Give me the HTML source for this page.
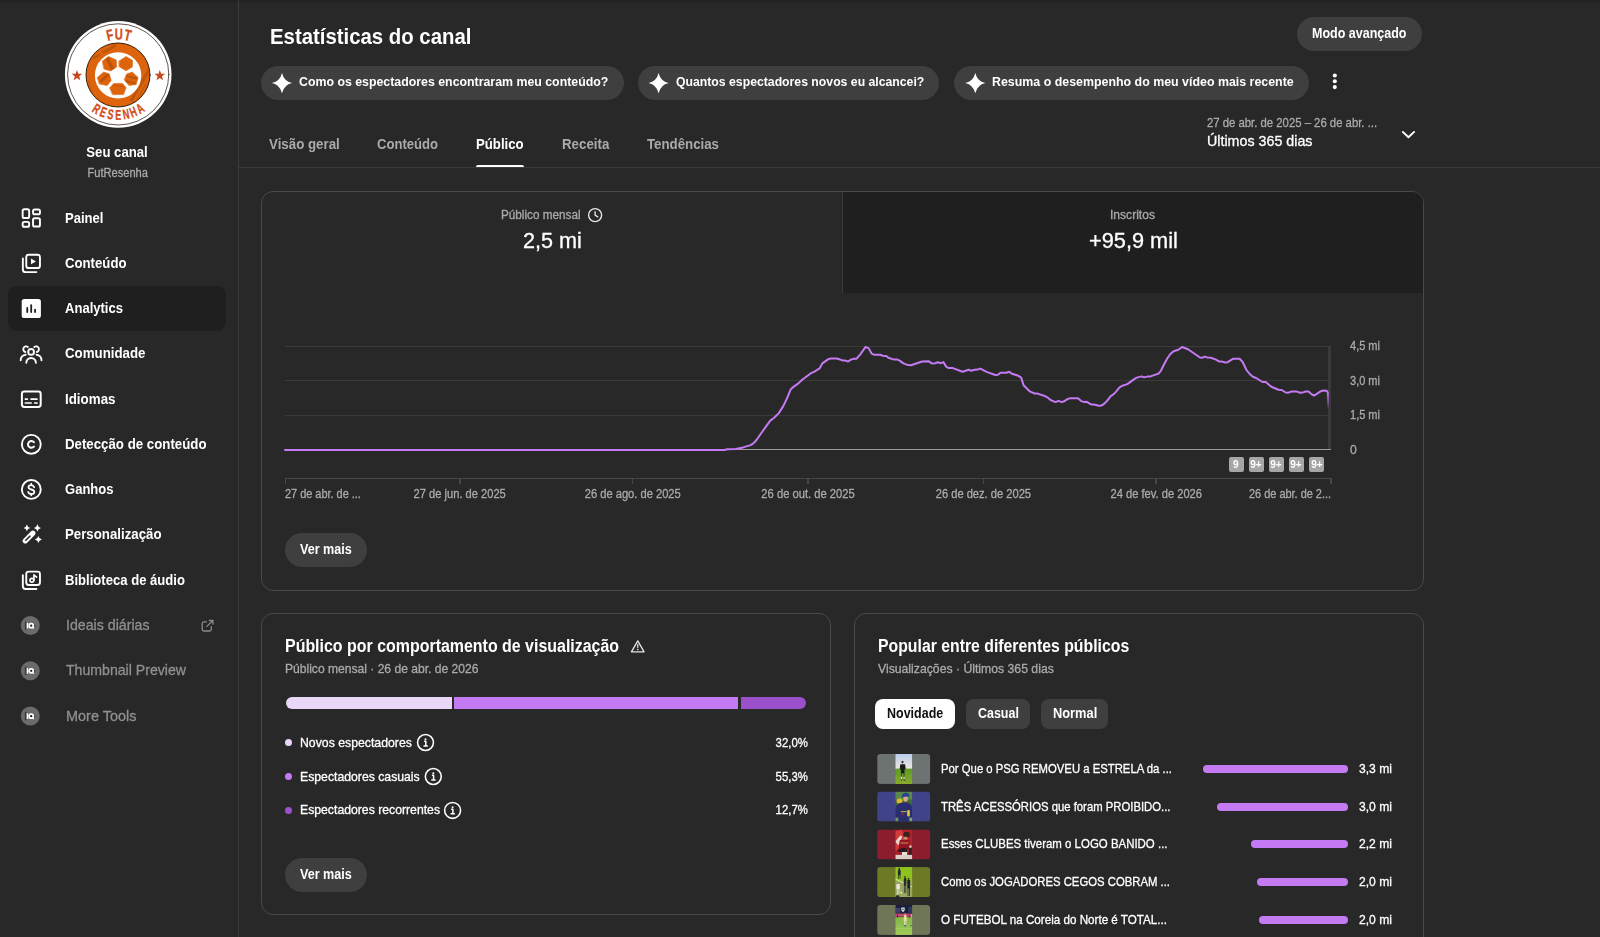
<!DOCTYPE html>
<html lang="pt-BR">
<head>
<meta charset="utf-8">
<title>Estatísticas do canal</title>
<style>
*{box-sizing:border-box;margin:0;padding:0}
html,body{width:1600px;height:937px;overflow:hidden;background:#282828;font-family:"Liberation Sans",sans-serif;color:#fff}
#root{position:relative;width:1600px;height:937px;overflow:hidden;background:#282828}
.a{position:absolute}
.t{position:absolute;white-space:pre;display:block}
.topshade{left:0;top:0;width:1600px;height:4px;background:linear-gradient(#222222,#282828)}
.sideborder{left:238px;top:0;width:1px;height:937px;background:#3b3b3b}
.sel{left:8px;top:286px;width:218px;height:45px;border-radius:9px;background:#1f1f1f}
.chip{height:34.2px;border-radius:17.1px;background:#3f3f3f;top:65.9px}
.pill{height:34px;border-radius:17px;background:#3f3f3f}
.tabline{left:239px;top:167px;width:1361px;height:1px;background:#3b3b3b}
.tabsel{left:476px;top:165px;width:48px;height:2.4px;background:#fff;border-radius:2px 2px 0 0}
.card{border:1px solid #494949;border-radius:12px;background:#282828}
.grid{left:285px;width:1046px;height:1px;background:#3a3a3a}
.badge{top:457px;width:15.4px;height:15.2px;border-radius:2px;background:#a6a6a6}
.dot{width:7.6px;height:7.6px;border-radius:50%}
.bar{height:8px;border-radius:4px;background:#c47af3}
.seg{top:697px;height:12px}
.btn{border-radius:8px;background:#3f3f3f;top:699px;height:29.9px}
</style>
</head>
<body>
<div id="root">
<div class="a topshade"></div>
<div class="a sideborder"></div>
<div class="a sel"></div>

<!-- header chips -->
<div class="a chip" style="left:261.1px;width:362.5px"></div>
<div class="a chip" style="left:638.2px;width:301.2px"></div>
<div class="a chip" style="left:954.2px;width:354.8px"></div>
<div class="a pill" style="left:1297px;top:16.8px;width:125px;height:34.1px"></div>
<div class="a tabline"></div>
<div class="a tabsel"></div>

<!-- card 1 -->
<div class="a card" style="left:261.1px;top:190.7px;width:1162.7px;height:400.1px;overflow:hidden">
  <div class="a" style="left:581px;top:0;width:582px;height:101.6px;background:#1f1f1f"></div>
  <div class="a" style="left:579.6px;top:0;width:1.6px;height:101.8px;background:#3b3b3b"></div>
</div>
<div class="a grid" style="top:346px"></div>
<div class="a grid" style="top:380.4px"></div>
<div class="a grid" style="top:414.8px"></div>
<div class="a" style="left:1327.7px;top:346px;width:3.7px;height:104px;background:#3a3a3a"></div>
<div class="a grid" style="top:449px;background:#9a9a9a;height:1.2px"></div>
<div class="a grid" style="top:477.7px;background:#474747;height:1.6px;width:1046.6px"></div>
<svg class="a" style="left:0;top:0" width="1600" height="937" viewBox="0 0 1600 937">
<defs><linearGradient id="fade" gradientUnits="userSpaceOnUse" x1="0" y1="390" x2="0" y2="412"><stop offset="0" stop-color="#c47af3"/><stop offset="1" stop-color="#c47af3" stop-opacity="0"/></linearGradient>
<mask id="lm"><rect x="0" y="0" width="1600" height="392" fill="#fff"/><rect x="0" y="392" width="1320" height="100" fill="#fff"/><rect x="1320" y="392" width="20" height="30" fill="url(#mg)"/></mask>
<linearGradient id="mg" gradientUnits="userSpaceOnUse" x1="0" y1="392" x2="0" y2="410"><stop offset="0" stop-color="#fff"/><stop offset="1" stop-color="#000"/></linearGradient></defs>
<path d="M285.0,450.0 L724.4,450.0 L727.2,449.3 L735.6,448.9 L743.1,447.4 L750.6,445.1 L753.4,443.4 L756.3,440.3 L761.9,432.2 L770.3,420.6 L774.1,417.8 L778.8,413.1 L783.4,405.9 L787.2,397.9 L790.6,389.6 L793.8,386.6 L798.4,383.4 L802.2,379.7 L811.6,372.8 L814.4,371.6 L819.6,368.4 L822.3,363.4 L828.4,359.1 L831.3,358.5 L836.9,358.5 L842.5,360.4 L845.3,360.6 L848.1,361.5 L850.9,359.6 L853.8,358.7 L856.6,358.7 L860.3,354.4 L865.6,346.9 L868.8,348.4 L871.6,353.6 L874.4,354.8 L880.0,354.8 L882.8,355.7 L886.0,355.9 L888.4,357.8 L894.1,359.6 L896.9,359.4 L899.7,360.6 L903.4,363.4 L908.1,365.1 L910.9,365.3 L922.2,361.5 L928.8,361.3 L931.9,363.4 L935.3,363.2 L937.8,362.3 L940.9,363.2 L943.4,362.1 L946.2,366.6 L948.4,367.9 L952.2,367.9 L962.5,371.8 L968.7,369.8 L971.3,370.7 L974.7,369.8 L977.5,369.6 L980.3,368.6 L986.6,371.9 L995.2,375.0 L997.9,374.8 L1000.5,372.8 L1006.4,372.8 L1009.1,371.8 L1012.0,373.7 L1018.4,375.8 L1021.2,377.6 L1023.6,385.2 L1029.6,391.3 L1034.4,393.4 L1037.6,393.6 L1044.0,395.7 L1047.3,397.3 L1050.5,400.0 L1055.6,402.1 L1058.5,400.9 L1061.7,402.1 L1064.1,401.3 L1067.7,398.9 L1070.5,398.2 L1078.0,398.2 L1081.2,401.1 L1083.8,401.9 L1086.5,401.7 L1089.7,403.7 L1092.1,404.6 L1095.3,404.8 L1098.5,405.7 L1100.9,405.7 L1103.3,404.5 L1106.5,401.6 L1110.5,396.3 L1113.7,394.1 L1116.1,391.6 L1119.3,387.6 L1121.7,386.0 L1127.3,384.1 L1135.3,378.4 L1137.7,377.4 L1141.7,376.4 L1144.1,377.4 L1147.3,376.6 L1150.5,376.4 L1158.5,373.6 L1160.9,370.8 L1163.2,366.0 L1167.2,358.5 L1170.4,354.0 L1173.6,351.3 L1178.4,349.7 L1182.1,347.0 L1188.0,349.2 L1200.0,357.5 L1202.0,357.7 L1204.8,356.6 L1207.2,357.5 L1210.9,357.7 L1216.0,359.6 L1218.9,361.4 L1221.6,361.4 L1224.9,362.5 L1227.3,362.3 L1232.9,358.8 L1239.6,358.8 L1242.5,361.7 L1246.5,370.0 L1249.7,374.0 L1252.9,376.8 L1256.1,378.0 L1262.5,382.0 L1265.7,382.0 L1271.3,386.8 L1278.5,389.7 L1281.7,390.0 L1285.7,392.5 L1288.1,392.8 L1291.3,391.6 L1296.9,391.6 L1300.1,392.8 L1302.5,392.6 L1305.7,391.5 L1308.6,391.5 L1311.3,394.1 L1314.0,395.5 L1316.1,394.4 L1320.9,391.2 L1323.3,390.5 L1326.5,390.7 L1327.8,392.3 L1328.2,410.0" fill="none" stroke="#c47af3" stroke-width="2" stroke-linejoin="round" stroke-linecap="round" mask="url(#lm)"/>
</svg><div class="a" style="left:284.6px;top:478px;width:1.6px;height:5.8px;background:#474747"></div><div class="a" style="left:459.4px;top:478px;width:1.6px;height:5.8px;background:#474747"></div><div class="a" style="left:631.8px;top:478px;width:1.6px;height:5.8px;background:#474747"></div><div class="a" style="left:807.3px;top:478px;width:1.6px;height:5.8px;background:#474747"></div><div class="a" style="left:982.5px;top:478px;width:1.6px;height:5.8px;background:#474747"></div><div class="a" style="left:1155.3px;top:478px;width:1.6px;height:5.8px;background:#474747"></div><div class="a" style="left:1330px;top:478px;width:1.6px;height:5.8px;background:#474747"></div><div class="a badge" style="left:1228.6px"></div><div class="a badge" style="left:1248.6px"></div><div class="a badge" style="left:1268.7px"></div><div class="a badge" style="left:1288.8px"></div><div class="a badge" style="left:1308.8px"></div>
<div class="a pill" style="left:285px;top:533px;width:82px;height:33.5px"></div>

<!-- card 2 -->
<div class="a card" style="left:261.1px;top:613.2px;width:569.9px;height:301.8px"></div>
<div class="a seg" style="left:286.4px;width:165.3px;background:#ead7f7;border-radius:6px 0 0 6px"></div>
<div class="a seg" style="left:454.3px;width:284.2px;background:#c47af3"></div>
<div class="a seg" style="left:740.7px;width:65.4px;background:#9a4fcb;border-radius:0 6px 6px 0"></div>
<div class="a dot" style="left:284.9px;top:738.7px;background:#ead7f7"></div>
<div class="a dot" style="left:284.9px;top:772.7px;background:#c47af3"></div>
<div class="a dot" style="left:284.9px;top:806.6px;background:#9a4fcb"></div>
<div class="a pill" style="left:285px;top:858px;width:82px;height:33.5px"></div>

<!-- card 3 -->
<div class="a card" style="left:854px;top:613.2px;width:569.8px;height:400px"></div>
<div class="a btn" style="left:875px;width:80px;background:#fff"></div>
<div class="a btn" style="left:966px;width:64px"></div>
<div class="a btn" style="left:1041.4px;width:66.9px"></div>
<div class="a bar" style="left:1202.6px;width:145.4px;top:764.7px"></div>
<div class="a bar" style="left:1216.8px;width:131.2px;top:802.5px"></div>
<div class="a bar" style="left:1251px;width:97px;top:840.3px"></div>
<div class="a bar" style="left:1257.3px;width:90.7px;top:878.1px"></div>
<div class="a bar" style="left:1259.2px;width:88.8px;top:915.9px"></div>
<svg class="a" style="left:0;top:0" width="1600" height="937" viewBox="0 0 1600 937">
<defs><filter id="bl" x="-10%" y="-10%" width="120%" height="120%"><feGaussianBlur stdDeviation="0.55"/></filter>
<clipPath id="tc0"><rect x="877.3" y="753.9" width="52.8" height="30" rx="3.2"/></clipPath>
<clipPath id="ic0"><rect x="895.3" y="753.9" width="17" height="30"/></clipPath>
<clipPath id="tc1"><rect x="877.3" y="791.6" width="52.8" height="30" rx="3.2"/></clipPath>
<clipPath id="ic1"><rect x="895.3" y="791.6" width="17" height="30"/></clipPath>
<clipPath id="tc2"><rect x="877.3" y="829.4" width="52.8" height="30" rx="3.2"/></clipPath>
<clipPath id="ic2"><rect x="895.3" y="829.4" width="17" height="30"/></clipPath>
<clipPath id="tc3"><rect x="877.3" y="867.1" width="52.8" height="30" rx="3.2"/></clipPath>
<clipPath id="ic3"><rect x="895.3" y="867.1" width="17" height="30"/></clipPath>
<clipPath id="tc4"><rect x="877.3" y="904.9" width="52.8" height="30" rx="3.2"/></clipPath>
<clipPath id="ic4"><rect x="895.3" y="904.9" width="17" height="30"/></clipPath>
<linearGradient id="sky" x1="0" y1="0" x2="0" y2="1"><stop offset="0" stop-color="#b9cdee"/><stop offset="1" stop-color="#ece6df"/></linearGradient>
<linearGradient id="grass1" x1="0" y1="0" x2="0" y2="1"><stop offset="0" stop-color="#5d9a22"/><stop offset="1" stop-color="#86ad2c"/></linearGradient>
<linearGradient id="grass5" x1="0" y1="0" x2="0" y2="1"><stop offset="0" stop-color="#6fa83a"/><stop offset="1" stop-color="#9fcb58"/></linearGradient>
</defs>
<g clip-path="url(#tc0)"><rect x="877" y="753.9" width="54" height="30" fill="#6c7370"/>
<g clip-path="url(#ic0)"><g filter="url(#bl)">
<rect x="895.3" y="753.9" width="17" height="15" fill="url(#sky)"/>
<rect x="895.3" y="768.6999999999999" width="17" height="15.4" fill="url(#grass1)"/>
<ellipse cx="902.5" cy="762.1" rx="1.1" ry="1.3" fill="#3a2e28"/>
<path d="M900.3,764.1999999999999 h4.8 l0.6,5 h-1.2 v4.3 h-3.6 v-4.3 h-1.2 z" fill="#181a1c"/>
<path d="M901.4,773.5 v6.2 M904.1,773.5 v6.2" stroke="#4a4038" stroke-width="1.1"/>
<path d="M901.4,776.6999999999999 v2.4 M904.1,776.6999999999999 v2.4" stroke="#ddd" stroke-width="1.2"/>
<path d="M900.8,780.1999999999999 h1.4 M903.8,780.5 h1.5" stroke="#7a3050" stroke-width="0.9"/>
</g></g></g>
<g clip-path="url(#tc1)"><rect x="877" y="791.6" width="54" height="30" fill="#40428a"/>
<g clip-path="url(#ic1)"><g filter="url(#bl)">
<rect x="895.3" y="791.6" width="17" height="30" fill="#3f6a35"/>
<rect x="895.3" y="791.6" width="17" height="8" fill="#5a8a48"/>
<ellipse cx="899.6" cy="801.0" rx="3" ry="2.6" fill="#e2b92e"/>
<path d="M895.3,821.6 v-14 q1.5,-4 6.5,-5.2 h5 q4.5,1 5.5,5 v14.2 z" fill="#2b2d70"/>
<ellipse cx="905.6" cy="799.0" rx="2.3" ry="2.8" fill="#d9a78e"/>
<path d="M901.6,797.6 q0.2,-4.8 4.2,-4.8 q3.6,0.2 3.6,4 q-3.9,-0.8 -7.8,0.8 z" fill="#2c3f92"/>
<rect x="907.2" y="810.0" width="2.6" height="6.4" rx="1" fill="#d6cf3e"/>
<rect x="900.8" y="811.0" width="5.8" height="1.2" fill="#c9bf3a" opacity="0.8"/>
<ellipse cx="902.7" cy="814.2" rx="1.6" ry="1.2" fill="#7a2a4a"/>
<rect x="895.3" y="817.6" width="3" height="4" fill="#6a9a5a"/><rect x="909.3" y="817.6" width="3" height="4" fill="#7aa070"/>
</g></g></g>
<g clip-path="url(#tc2)"><rect x="877" y="829.4" width="54" height="30" fill="#8b1d2d"/>
<g clip-path="url(#ic2)"><g filter="url(#bl)">
<rect x="895.3" y="829.4" width="17" height="30" fill="#b2202c"/>
<path d="M895.3,831.4 l6,-2 l4,6 l-3,8 l-7,8 z" fill="#d63a3a"/>
<path d="M895.3,841.4 l5,-6 l2,1 l-4,9 z" fill="#e8d8d0"/>
<ellipse cx="906.5" cy="834.8" rx="3.4" ry="3" fill="#3a2420"/>
<ellipse cx="905.6" cy="838.1999999999999" rx="2" ry="1.6" fill="#c88a70"/>
<path d="M899.8,839.9 h9.6 l1.2,9 h-12 z" fill="#8e1626"/>
<path d="M900.5,843.0 h8 " stroke="#d8a040" stroke-width="0.9"/>
<path d="M897.6,850.4 q5,-4 10,-1.5 l-1,3 h-9 z" fill="#2a1a1c"/>
<rect x="908.8" y="847.4" width="3" height="12" fill="#2a2226"/>
<rect x="895.3" y="854.9" width="17" height="4.5" fill="#d8cfc8"/>
<rect x="902" y="852.0" width="5" height="3.2" fill="#e6e0da"/>
<rect x="909.3" y="845.4" width="2.2" height="2.4" fill="#d8d0c8"/>
</g></g></g>
<g clip-path="url(#tc3)"><rect x="877" y="867.1" width="54" height="30" fill="#6e7925"/>
<g clip-path="url(#ic3)"><g filter="url(#bl)">
<rect x="895.3" y="867.1" width="17" height="30" fill="#8fc21f"/>
<rect x="895.3" y="881.1" width="17" height="16" fill="#9aa860"/>
<path d="M895.3,879.1 l17,8" stroke="#dfe8c8" stroke-width="0.9"/>
<ellipse cx="899.2" cy="868.9" rx="1" ry="1.1" fill="#3a3028"/><rect x="897.9" y="869.9" width="2.8" height="5.4" rx="0.8" fill="#23262a"/><path d="M898.5,875.1 v3.6 M900,875.1 v3.6" stroke="#2a2c30" stroke-width="0.8"/>
<ellipse cx="905" cy="877.1" rx="0.9" ry="1" fill="#4a3a30"/><rect x="903.8" y="878.1" width="2.6" height="8" rx="0.8" fill="#2a2c2e"/><path d="M904.4,886.1 v7 M905.8,886.1 v7" stroke="#30343a" stroke-width="0.8"/>
<ellipse cx="908.6" cy="878.7" rx="0.9" ry="1" fill="#3a2e28"/><rect x="907.3" y="879.7" width="2.8" height="9" rx="0.8" fill="#1f2226"/><path d="M908,888.6 v7.5 M909.5,888.6 v7.5" stroke="#23262a" stroke-width="0.8"/>
<ellipse cx="898" cy="883.1" rx="1" ry="1" fill="#b08a70"/><rect x="896.3" y="884.1" width="3.6" height="5.2" rx="1" fill="#ece4dc"/><path d="M897.3,889.1 v6 M899,889.1 v5" stroke="#e2d8cc" stroke-width="0.9"/>
<ellipse cx="897.6" cy="896.3000000000001" rx="2" ry="1.1" fill="#30281e"/>
<ellipse cx="901.2" cy="892.7" rx="0.9" ry="0.9" fill="#e8e8e8"/>
</g></g></g>
<g clip-path="url(#tc4)"><rect x="877" y="904.9" width="54" height="30" fill="#6e7658"/>
<g clip-path="url(#ic4)"><g filter="url(#bl)">
<rect x="895.3" y="904.9" width="17" height="30" fill="url(#grass5)"/>
<rect x="895.3" y="904.9" width="17" height="9" fill="#1c1d3c"/>
<rect x="895.3" y="907.9" width="5" height="5" fill="#3d3f6a"/><rect x="908.3" y="906.9" width="4" height="6" fill="#2c3a5a"/>
<path d="M901.3,907.5 h3.4 v2.8 q-1.7,2 -1.7,2 q-1.7,-2 -1.7,-2 z" fill="#dfe9e6"/><circle cx="903" cy="909.3" r="0.9" fill="#3d7a5a"/>
<rect x="895.3" y="913.5" width="17" height="3.6" fill="#a0345a"/>
<rect x="895.3" y="914.5" width="17" height="1.2" fill="#d65a90"/>
<rect x="897" y="914.9" width="1" height="2.6" fill="#2a2a40"/><rect x="909" y="914.5" width="1.2" height="3" fill="#7a2a3a"/><rect x="910.8" y="914.3" width="1" height="3" fill="#c8c0c8"/>
<ellipse cx="905.2" cy="914.3" rx="0.9" ry="1" fill="#c09a70"/><path d="M904,915.3 h2.4 l0.4,5.6 h-3.2 z" fill="#eadf9a"/><path d="M904.5,920.9 v4.4 M905.9,920.9 v4.4" stroke="#e8e2c8" stroke-width="0.8"/><ellipse cx="905" cy="925.6999999999999" rx="1.3" ry="0.6" fill="#3a5aa0"/>
<ellipse cx="911" cy="925.6999999999999" rx="0.6" ry="0.6" fill="#2a4a80"/>
<path d="M895.3,928.4 h17" stroke="#b8da7a" stroke-width="0.5"/>
</g></g></g>
</svg>
<svg class="a" style="left:0;top:0" width="1600" height="937" viewBox="0 0 1600 937" fill="none" stroke="#fff" stroke-width="1.9" stroke-linecap="round" stroke-linejoin="round">
<g stroke="none">
<circle cx="118.2" cy="74.4" r="53.3" fill="#fff"/>
<circle cx="118.2" cy="74.4" r="50.6" fill="none" stroke="#3a2a22" stroke-width="0.8"/>
<defs><clipPath id="oc"><circle cx="118.0" cy="75.0" r="31.6"/></clipPath><clipPath id="bc"><circle cx="118.0" cy="75.6" r="22.6"/></clipPath></defs>
<circle cx="118.0" cy="75.0" r="32" fill="#dd640c" stroke="#1c1008" stroke-width="0.9"/>
<g clip-path="url(#oc)" stroke="#b9520a" stroke-opacity="0.8" stroke-linecap="butt"><path d="M102.5,53 L116,45" stroke-width="3"/><path d="M93,58.5 L100,54.5" stroke-width="2.4"/><path d="M131,101 L150,68" stroke-width="3.2"/><path d="M137.5,99 L146,84" stroke-width="1.6" stroke-opacity="0.5"/><path d="M88,80 L93,95" stroke-width="1.5" stroke-opacity="0.4"/></g>
<circle cx="118.1" cy="75.4" r="23.2" fill="#fff"/>
<defs><clipPath id="pc">
<polygon points="102.5,60.9 108.7,56.5 116.3,60.1 116.7,67.0 110.5,71.0 104.0,68.9"/>
<polygon points="119.2,60.9 126.1,56.5 132.6,60.5 132.3,67.0 126.1,70.7 119.2,66.7"/>
<polygon points="97.4,77.6 103.6,72.1 109.4,73.9 111.2,80.5 107.2,85.5 99.6,84.1"/>
<polygon points="126.8,73.9 132.3,72.1 138.1,77.6 136.2,84.5 129.0,85.5 124.3,80.1"/>
<polygon points="109.8,87.7 113.8,83.4 122.5,83.4 126.1,87.7 123.5,94.6 112.7,94.6"/>
</clipPath></defs>
<polygon points="102.5,60.9 108.7,56.5 116.3,60.1 116.7,67.0 110.5,71.0 104.0,68.9" fill="#dd640c" stroke="#dd640c" stroke-width="0.6" stroke-linejoin="round"/>
<polygon points="119.2,60.9 126.1,56.5 132.6,60.5 132.3,67.0 126.1,70.7 119.2,66.7" fill="#dd640c" stroke="#dd640c" stroke-width="0.6" stroke-linejoin="round"/>
<polygon points="97.4,77.6 103.6,72.1 109.4,73.9 111.2,80.5 107.2,85.5 99.6,84.1" fill="#dd640c" stroke="#dd640c" stroke-width="0.6" stroke-linejoin="round"/>
<polygon points="126.8,73.9 132.3,72.1 138.1,77.6 136.2,84.5 129.0,85.5 124.3,80.1" fill="#dd640c" stroke="#dd640c" stroke-width="0.6" stroke-linejoin="round"/>
<polygon points="109.8,87.7 113.8,83.4 122.5,83.4 126.1,87.7 123.5,94.6 112.7,94.6" fill="#dd640c" stroke="#dd640c" stroke-width="0.6" stroke-linejoin="round"/>
<g clip-path="url(#pc)" stroke="#b9520a" stroke-opacity="0.9" stroke-linecap="butt"><path d="M106.3,56.5 L113.4,70.5" stroke-width="3.6"/><path d="M100.6,81.8 L108.2,74.3" stroke-width="3"/><path d="M126.5,76 L137,78.6" stroke-width="2.2"/><path d="M126,81 L135.5,83.6" stroke-width="2"/><path d="M112,85.2 L124,86.6" stroke-width="1.2" stroke-opacity="0.5"/></g>
<polygon points="77.00,70.00 78.35,73.74 82.33,73.87 79.19,76.31 80.29,80.13 77.00,77.90 73.71,80.13 74.81,76.31 71.67,73.87 75.65,73.74" fill="#c44a1c"/>
<polygon points="159.80,70.00 161.15,73.74 165.13,73.87 161.99,76.31 163.09,80.13 159.80,77.90 156.51,80.13 157.61,76.31 154.47,73.87 158.45,73.74" fill="#c44a1c"/>
<text transform="translate(110.99,40.34) rotate(-12.60) scale(0.71,1)" x="0" y="0" text-anchor="middle" font-family="Liberation Sans, sans-serif" font-weight="700" font-size="15.6" fill="#cf4f1c" stroke="#cf4f1c" stroke-width="0.35">F</text>
<text transform="translate(118.78,39.50) rotate(0.30) scale(0.71,1)" x="0" y="0" text-anchor="middle" font-family="Liberation Sans, sans-serif" font-weight="700" font-size="15.6" fill="#cf4f1c" stroke="#cf4f1c" stroke-width="0.35">U</text>
<text transform="translate(126.45,40.39) rotate(13.00) scale(0.71,1)" x="0" y="0" text-anchor="middle" font-family="Liberation Sans, sans-serif" font-weight="700" font-size="15.6" fill="#cf4f1c" stroke="#cf4f1c" stroke-width="0.35">T</text>
<text transform="translate(94.07,112.86) rotate(32.10) scale(0.64,1)" x="0" y="0" text-anchor="middle" font-family="Liberation Sans, sans-serif" font-weight="700" font-size="14.0" fill="#cf4f1c" stroke="#cf4f1c" stroke-width="0.35">R</text>
<text transform="translate(101.63,116.67) rotate(21.40) scale(0.64,1)" x="0" y="0" text-anchor="middle" font-family="Liberation Sans, sans-serif" font-weight="700" font-size="14.0" fill="#cf4f1c" stroke="#cf4f1c" stroke-width="0.35">E</text>
<text transform="translate(109.77,119.01) rotate(10.70) scale(0.64,1)" x="0" y="0" text-anchor="middle" font-family="Liberation Sans, sans-serif" font-weight="700" font-size="14.0" fill="#cf4f1c" stroke="#cf4f1c" stroke-width="0.35">S</text>
<text transform="translate(118.28,119.80) rotate(-0.10) scale(0.64,1)" x="0" y="0" text-anchor="middle" font-family="Liberation Sans, sans-serif" font-weight="700" font-size="14.0" fill="#cf4f1c" stroke="#cf4f1c" stroke-width="0.35">E</text>
<text transform="translate(126.86,118.97) rotate(-11.00) scale(0.64,1)" x="0" y="0" text-anchor="middle" font-family="Liberation Sans, sans-serif" font-weight="700" font-size="14.0" fill="#cf4f1c" stroke="#cf4f1c" stroke-width="0.35">N</text>
<text transform="translate(135.13,116.52) rotate(-21.90) scale(0.64,1)" x="0" y="0" text-anchor="middle" font-family="Liberation Sans, sans-serif" font-weight="700" font-size="14.0" fill="#cf4f1c" stroke="#cf4f1c" stroke-width="0.35">H</text>
<text transform="translate(142.73,112.60) rotate(-32.70) scale(0.64,1)" x="0" y="0" text-anchor="middle" font-family="Liberation Sans, sans-serif" font-weight="700" font-size="14.0" fill="#cf4f1c" stroke="#cf4f1c" stroke-width="0.35">A</text>
</g>
<rect x="22.65" y="209.25" width="6.5" height="8.8" rx="1.6"/><rect x="33.05" y="209.55" width="6.9" height="4.7" rx="1.6"/><rect x="22.65" y="221.85" width="6.5" height="4.9" rx="1.6"/><rect x="33.05" y="218.25" width="6.9" height="8.3" rx="1.6"/>
<rect x="26.25" y="254.75" width="13.7" height="13.3" rx="2.4"/><path d="M22.85,258.4 V269.4 a2.7,2.7 0 0 0 2.7,2.7 H36.4"/>
<path d="M31,258.5 L35.9,261.4 L31,264.3 Z" fill="#fff" stroke="none"/>
<rect x="21.7" y="299" width="19.2" height="19" rx="2.6" fill="#fff" stroke="none"/><g stroke="#1f1f1f" stroke-width="1.8" stroke-linecap="round"><path d="M27.25,308 V312"/><path d="M31.2,305.1 V312"/><path d="M35.05,309.7 V312"/></g>
<circle cx="31.1" cy="351.9" r="2.9"/><path d="M26.3,362.8 a4.8,4.8 0 0 1 9.6,0"/><path d="M27.9,346.9 A2.9,2.9 0 1 0 25.3,352"/><path d="M34.3,346.9 A2.9,2.9 0 1 1 36.9,352"/><path d="M20.7,360.2 A5.6,5.6 0 0 1 25.7,354.7"/><path d="M41.5,360.2 A5.6,5.6 0 0 0 36.5,354.7"/>
<rect x="21.9" y="391.6" width="18.8" height="15.3" rx="2.4" stroke-width="2"/><g stroke-width="1.7"><path d="M25.4,399.1 H27.3"/><path d="M31,399.1 H37"/><path d="M25.4,403 H31.1"/><path d="M34.7,403 H37"/></g>
<circle cx="31.3" cy="444.3" r="9.45"/><path d="M33.9,442.2 A3.35,3.35 0 1 0 33.9,446.6" stroke-width="2"/>
<circle cx="31.3" cy="489.4" r="9.45"/><path d="M31.3,483.7 V485.2 M31.3,493.9 V495.3" stroke-width="1.7"/><path d="M34.2,487.2 C33.6,485.6 32.4,485.1 31.2,485.1 C29.6,485.1 28.5,486 28.5,487.3 C28.5,488.6 29.6,489.1 31.3,489.5 C33.1,489.9 34.3,490.5 34.3,491.9 C34.3,493.2 33.1,494 31.4,494 C29.8,494 28.6,493.3 28.2,491.9" stroke-width="1.8"/>
<path d="M25.3,540.8 L32.9,533.2" stroke-width="5.3"/><path d="M25.4,540.7 L30.4,535.7" stroke="#282828" stroke-width="1.6" stroke-linecap="butt"/>
<path d="M26.9,524.5 Q27.444,527.356 30.299999999999997,527.9 Q27.444,528.444 26.9,531.3 Q26.355999999999998,528.444 23.5,527.9 Q26.355999999999998,527.356 26.9,524.5 Z" fill="#fff" stroke="none"/>
<path d="M37.4,524.3 Q37.976,527.324 41.0,527.9 Q37.976,528.476 37.4,531.5 Q36.824,528.476 33.8,527.9 Q36.824,527.324 37.4,524.3 Z" fill="#fff" stroke="none"/>
<path d="M38.4,535.9 Q38.96,538.84 41.9,539.4 Q38.96,539.9599999999999 38.4,542.9 Q37.839999999999996,539.9599999999999 34.9,539.4 Q37.839999999999996,538.84 38.4,535.9 Z" fill="#fff" stroke="none"/>
<rect x="26.25" y="571.65" width="13.7" height="13.3" rx="2.4"/><path d="M22.85,575.3 V586.3 a2.7,2.7 0 0 0 2.7,2.7 H36.4"/>
<circle cx="31.9" cy="580.3" r="1.9" stroke-width="1.6"/><path d="M33.9,580.3 V574.8 L36.6,577.2" stroke-width="1.6"/>
<circle cx="30.3" cy="625.5" r="9.5" fill="#6b6b6b" stroke="none"/>
<path d="M26.5,621.9 h-1.1 v7.4 h1.1" stroke="#2c2c2c" stroke-width="0.9" stroke-linecap="butt" stroke-linejoin="miter"/>
<rect x="26.8" y="622.8" width="1.4" height="5.7" fill="#fff" stroke="none"/>
<circle cx="31.2" cy="625.65" r="2.0" stroke="#fff" stroke-width="1.7" fill="#1e1e1e"/>
<path d="M32.5,627.2 L33.8,628.7" stroke="#fff" stroke-width="1.1" stroke-linecap="butt"/>
<circle cx="34.95" cy="625.6" r="0.65" fill="#2c2c2c" stroke="none"/>
<circle cx="30.3" cy="670.7" r="9.5" fill="#6b6b6b" stroke="none"/>
<path d="M26.5,667.1 h-1.1 v7.4 h1.1" stroke="#2c2c2c" stroke-width="0.9" stroke-linecap="butt" stroke-linejoin="miter"/>
<rect x="26.8" y="668.0" width="1.4" height="5.7" fill="#fff" stroke="none"/>
<circle cx="31.2" cy="670.85" r="2.0" stroke="#fff" stroke-width="1.7" fill="#1e1e1e"/>
<path d="M32.5,672.4000000000001 L33.8,673.9000000000001" stroke="#fff" stroke-width="1.1" stroke-linecap="butt"/>
<circle cx="34.95" cy="670.8000000000001" r="0.65" fill="#2c2c2c" stroke="none"/>
<circle cx="30.3" cy="716" r="9.5" fill="#6b6b6b" stroke="none"/>
<path d="M26.5,712.4 h-1.1 v7.4 h1.1" stroke="#2c2c2c" stroke-width="0.9" stroke-linecap="butt" stroke-linejoin="miter"/>
<rect x="26.8" y="713.3" width="1.4" height="5.7" fill="#fff" stroke="none"/>
<circle cx="31.2" cy="716.15" r="2.0" stroke="#fff" stroke-width="1.7" fill="#1e1e1e"/>
<path d="M32.5,717.7 L33.8,719.2" stroke="#fff" stroke-width="1.1" stroke-linecap="butt"/>
<circle cx="34.95" cy="716.1" r="0.65" fill="#2c2c2c" stroke="none"/>
<g stroke="#8c8c8c" stroke-width="1.3"><path d="M206.5,621.9 H204 a1.8,1.8 0 0 0 -1.8,1.8 V629.2 a1.8,1.8 0 0 0 1.8,1.8 H209.5 a1.8,1.8 0 0 0 1.8,-1.8 V626.6"/><path d="M206.8,626.4 L212.6,620.7"/><path d="M209.4,620.5 H212.9 V624" /></g>
<path d="M282,73.0 Q283.919,81.181 292.1,83.1 Q283.919,85.01899999999999 282,93.19999999999999 Q280.081,85.01899999999999 271.9,83.1 Q280.081,81.181 282,73.0 Z" fill="#fff" stroke="none"/>
<path d="M658.6,73.0 Q660.519,81.181 668.7,83.1 Q660.519,85.01899999999999 658.6,93.19999999999999 Q656.681,85.01899999999999 648.5,83.1 Q656.681,81.181 658.6,73.0 Z" fill="#fff" stroke="none"/>
<path d="M975.3,73.0 Q977.2189999999999,81.181 985.4,83.1 Q977.2189999999999,85.01899999999999 975.3,93.19999999999999 Q973.381,85.01899999999999 965.1999999999999,83.1 Q973.381,81.181 975.3,73.0 Z" fill="#fff" stroke="none"/>
<circle cx="1334.8" cy="75.5" r="2.05" fill="#fff" stroke="none"/>
<circle cx="1334.8" cy="81.3" r="2.05" fill="#fff" stroke="none"/>
<circle cx="1334.8" cy="87.1" r="2.05" fill="#fff" stroke="none"/>
<path d="M1402.8,131.9 L1408.45,137.3 L1414.1,131.9" stroke-width="1.9"/>
<g stroke="#e6e6e6" stroke-width="1.35"><circle cx="595.1" cy="215.1" r="6.55"/><path d="M595.1,211.7 V215.2 L597.8,216.8"/></g>
<g stroke="#e6e6e6" stroke-width="1.3"><path d="M637.75,640.9 L644.1,651.8 H631.4 Z"/><path d="M637.75,644.5 V647.6" stroke-width="1.2"/><circle cx="637.75" cy="649.6" r="0.35" stroke-width="0.8"/></g>
<circle cx="425.5" cy="742.5" r="7.95" stroke-width="1.55"/>
<circle cx="425.5" cy="739.3" r="1" fill="#fff" stroke="none"/>
<path d="M424.1,741.3 H425.8 V745.7 M423.5,745.9 H427.8" stroke-width="1.5" stroke-linecap="butt"/>
<circle cx="433.3" cy="776.5" r="7.95" stroke-width="1.55"/>
<circle cx="433.3" cy="773.3" r="1" fill="#fff" stroke="none"/>
<path d="M431.90000000000003,775.3 H433.6 V779.7 M431.3,779.9 H435.6" stroke-width="1.5" stroke-linecap="butt"/>
<circle cx="452.6" cy="810.4" r="7.95" stroke-width="1.55"/>
<circle cx="452.6" cy="807.1999999999999" r="1" fill="#fff" stroke="none"/>
<path d="M451.20000000000005,809.1999999999999 H452.90000000000003 V813.6 M450.6,813.8 H454.90000000000003" stroke-width="1.5" stroke-linecap="butt"/>
</svg>
<span class="t" style="left:82.48px;top:143.00px;font-size:15px;line-height:18px;font-weight:700;color:#fff;transform:scaleX(0.8780);transform-origin:50% 50%">Seu canal</span>
<span class="t" style="left:84.81px;top:165.50px;font-size:12px;line-height:14px;font-weight:400;color:#aaaaaa;-webkit-text-stroke:0.30px #aaaaaa;transform:scaleX(0.9254);transform-origin:50% 50%">FutResenha</span>
<span class="t" style="left:65.00px;top:208.50px;font-size:15px;line-height:18px;font-weight:700;color:#fff;transform:scaleX(0.8713);transform-origin:0 50%">Painel</span>
<span class="t" style="left:65.00px;top:253.77px;font-size:15px;line-height:18px;font-weight:700;color:#fff;transform:scaleX(0.8788);transform-origin:0 50%">Conteúdo</span>
<span class="t" style="left:65.00px;top:299.04px;font-size:15px;line-height:18px;font-weight:700;color:#fff;transform:scaleX(0.8695);transform-origin:0 50%">Analytics</span>
<span class="t" style="left:65.00px;top:344.31px;font-size:15px;line-height:18px;font-weight:700;color:#fff;transform:scaleX(0.8861);transform-origin:0 50%">Comunidade</span>
<span class="t" style="left:65.00px;top:389.58px;font-size:15px;line-height:18px;font-weight:700;color:#fff;transform:scaleX(0.8908);transform-origin:0 50%">Idiomas</span>
<span class="t" style="left:65.00px;top:434.85px;font-size:15px;line-height:18px;font-weight:700;color:#fff;transform:scaleX(0.8841);transform-origin:0 50%">Detecção de conteúdo</span>
<span class="t" style="left:65.00px;top:480.12px;font-size:15px;line-height:18px;font-weight:700;color:#fff;transform:scaleX(0.8685);transform-origin:0 50%">Ganhos</span>
<span class="t" style="left:65.00px;top:525.39px;font-size:15px;line-height:18px;font-weight:700;color:#fff;transform:scaleX(0.8835);transform-origin:0 50%">Personalização</span>
<span class="t" style="left:65.00px;top:570.66px;font-size:15px;line-height:18px;font-weight:700;color:#fff;transform:scaleX(0.8725);transform-origin:0 50%">Biblioteca de áudio</span>
<span class="t" style="left:66.00px;top:616.00px;font-size:15px;line-height:18px;font-weight:400;color:#909090;-webkit-text-stroke:0.30px #909090;transform:scaleX(0.9447);transform-origin:0 50%">Ideais diárias</span>
<span class="t" style="left:66.00px;top:661.20px;font-size:15px;line-height:18px;font-weight:400;color:#909090;-webkit-text-stroke:0.30px #909090;transform:scaleX(0.9407);transform-origin:0 50%">Thumbnail Preview</span>
<span class="t" style="left:66.00px;top:706.50px;font-size:15px;line-height:18px;font-weight:400;color:#909090;-webkit-text-stroke:0.30px #909090;transform:scaleX(0.9645);transform-origin:0 50%">More Tools</span>
<span class="t" style="left:269.60px;top:23.50px;font-size:21.6px;line-height:26px;font-weight:700;color:#fff;transform:scaleX(0.9427);transform-origin:0 50%">Estatísticas do canal</span>
<span class="t" style="left:298.90px;top:74.30px;font-size:13.2px;line-height:16px;font-weight:700;color:#fff;transform:scaleX(0.9359);transform-origin:0 50%">Como os espectadores encontraram meu conteúdo?</span>
<span class="t" style="left:675.70px;top:74.30px;font-size:13.2px;line-height:16px;font-weight:700;color:#fff;transform:scaleX(0.9282);transform-origin:0 50%">Quantos espectadores novos eu alcancei?</span>
<span class="t" style="left:992.00px;top:74.30px;font-size:13.2px;line-height:16px;font-weight:700;color:#fff;transform:scaleX(0.9399);transform-origin:0 50%">Resuma o desempenho do meu vídeo mais recente</span>
<span class="t" style="left:1312.30px;top:25.10px;font-size:14px;line-height:17px;font-weight:700;color:#fff;transform:scaleX(0.8932);transform-origin:0 50%">Modo avançado</span>
<span class="t" style="left:1206.70px;top:115.60px;font-size:12px;line-height:14px;font-weight:400;color:#aaaaaa;-webkit-text-stroke:0.30px #aaaaaa;transform:scaleX(0.9442);transform-origin:0 50%">27 de abr. de 2025 – 26 de abr. ...</span>
<span class="t" style="left:1206.70px;top:132.30px;font-size:15px;line-height:18px;font-weight:400;color:#fff;-webkit-text-stroke:0.30px #fff;transform:scaleX(0.9514);transform-origin:0 50%">Últimos 365 dias</span>
<span class="t" style="left:268.90px;top:135.00px;font-size:15px;line-height:18px;font-weight:700;color:#aaaaaa;transform:scaleX(0.8874);transform-origin:0 50%">Visão geral</span>
<span class="t" style="left:377.20px;top:135.00px;font-size:15px;line-height:18px;font-weight:700;color:#aaaaaa;transform:scaleX(0.8731);transform-origin:0 50%">Conteúdo</span>
<span class="t" style="left:476.20px;top:135.00px;font-size:15px;line-height:18px;font-weight:700;color:#fff;transform:scaleX(0.8787);transform-origin:0 50%">Público</span>
<span class="t" style="left:561.70px;top:135.00px;font-size:15px;line-height:18px;font-weight:700;color:#aaaaaa;transform:scaleX(0.8862);transform-origin:0 50%">Receita</span>
<span class="t" style="left:647.20px;top:135.00px;font-size:15px;line-height:18px;font-weight:700;color:#aaaaaa;transform:scaleX(0.8843);transform-origin:0 50%">Tendências</span>
<span class="t" style="left:501.20px;top:208.00px;font-size:12px;line-height:14px;font-weight:400;color:#aaaaaa;-webkit-text-stroke:0.30px #aaaaaa;transform:scaleX(0.9770);transform-origin:0 50%">Público mensal</span>
<span class="t" style="left:522.60px;top:227.00px;font-size:22.5px;line-height:27px;font-weight:400;color:#fff;-webkit-text-stroke:0.30px #fff;transform:scaleX(0.9611);transform-origin:0 50%">2,5 mi</span>
<span class="t" style="left:1110.10px;top:208.00px;font-size:12px;line-height:14px;font-weight:400;color:#aaaaaa;-webkit-text-stroke:0.30px #aaaaaa;transform:scaleX(1.0070);transform-origin:0 50%">Inscritos</span>
<span class="t" style="left:1088.70px;top:227.00px;font-size:22.5px;line-height:27px;font-weight:400;color:#fff;-webkit-text-stroke:0.30px #fff;transform:scaleX(0.9670);transform-origin:0 50%">+95,9 mil</span>
<span class="t" style="left:1350.00px;top:339.00px;font-size:12px;line-height:14px;font-weight:400;color:#aaaaaa;-webkit-text-stroke:0.30px #aaaaaa;transform:scaleX(0.9178);transform-origin:0 50%">4,5 mi</span>
<span class="t" style="left:1350.00px;top:373.50px;font-size:12px;line-height:14px;font-weight:400;color:#aaaaaa;-webkit-text-stroke:0.30px #aaaaaa;transform:scaleX(0.9178);transform-origin:0 50%">3,0 mi</span>
<span class="t" style="left:1350.00px;top:408.00px;font-size:12px;line-height:14px;font-weight:400;color:#aaaaaa;-webkit-text-stroke:0.30px #aaaaaa;transform:scaleX(0.9178);transform-origin:0 50%">1,5 mi</span>
<span class="t" style="left:1350.00px;top:442.80px;font-size:12px;line-height:14px;font-weight:400;color:#aaaaaa;-webkit-text-stroke:0.30px #aaaaaa;transform:scaleX(1.0168);transform-origin:0 50%">0</span>
<span class="t" style="left:285.00px;top:487.40px;font-size:12px;line-height:14px;font-weight:400;color:#aaaaaa;-webkit-text-stroke:0.30px #aaaaaa;transform:scaleX(0.9100);transform-origin:0 50%">27 de abr. de ...</span>
<span class="t" style="left:410.49px;top:487.40px;font-size:12px;line-height:14px;font-weight:400;color:#aaaaaa;-webkit-text-stroke:0.30px #aaaaaa;transform:scaleX(0.9274);transform-origin:50% 50%">27 de jun. de 2025</span>
<span class="t" style="left:580.98px;top:487.40px;font-size:12px;line-height:14px;font-weight:400;color:#aaaaaa;-webkit-text-stroke:0.30px #aaaaaa;transform:scaleX(0.9281);transform-origin:50% 50%">26 de ago. de 2025</span>
<span class="t" style="left:757.95px;top:487.40px;font-size:12px;line-height:14px;font-weight:400;color:#aaaaaa;-webkit-text-stroke:0.30px #aaaaaa;transform:scaleX(0.9331);transform-origin:50% 50%">26 de out. de 2025</span>
<span class="t" style="left:932.02px;top:487.40px;font-size:12px;line-height:14px;font-weight:400;color:#aaaaaa;-webkit-text-stroke:0.30px #aaaaaa;transform:scaleX(0.9274);transform-origin:50% 50%">26 de dez. de 2025</span>
<span class="t" style="left:1106.63px;top:487.40px;font-size:12px;line-height:14px;font-weight:400;color:#aaaaaa;-webkit-text-stroke:0.30px #aaaaaa;transform:scaleX(0.9286);transform-origin:50% 50%">24 de fev. de 2026</span>
<span class="t" style="left:1240.52px;top:487.40px;font-size:12px;line-height:14px;font-weight:400;color:#aaaaaa;-webkit-text-stroke:0.30px #aaaaaa;transform:scaleX(0.9114);transform-origin:100% 50%">26 de abr. de 2...</span>
<span class="t" style="left:300.10px;top:541.00px;font-size:14px;line-height:17px;font-weight:700;color:#fff;transform:scaleX(0.8992);transform-origin:0 50%">Ver mais</span>
<span class="t" style="left:284.90px;top:635.30px;font-size:18px;line-height:22px;font-weight:700;color:#fff;transform:scaleX(0.8860);transform-origin:0 50%">Público por comportamento de visualização</span>
<span class="t" style="left:285.00px;top:660.60px;font-size:13px;line-height:16px;font-weight:400;color:#aaaaaa;-webkit-text-stroke:0.30px #aaaaaa;transform:scaleX(0.9292);transform-origin:0 50%">Público mensal · 26 de abr. de 2026</span>
<span class="t" style="left:300.20px;top:734.50px;font-size:13px;line-height:16px;font-weight:400;color:#fff;-webkit-text-stroke:0.30px #fff;transform:scaleX(0.9442);transform-origin:0 50%">Novos espectadores</span>
<span class="t" style="left:300.20px;top:768.50px;font-size:13px;line-height:16px;font-weight:400;color:#fff;-webkit-text-stroke:0.30px #fff;transform:scaleX(0.9411);transform-origin:0 50%">Espectadores casuais</span>
<span class="t" style="left:300.20px;top:802.40px;font-size:13px;line-height:16px;font-weight:400;color:#fff;-webkit-text-stroke:0.30px #fff;transform:scaleX(0.9405);transform-origin:0 50%">Espectadores recorrentes</span>
<span class="t" style="left:770.73px;top:734.50px;font-size:13px;line-height:16px;font-weight:400;color:#fff;-webkit-text-stroke:0.30px #fff;transform:scaleX(0.8759);transform-origin:100% 50%">32,0%</span>
<span class="t" style="left:770.73px;top:768.50px;font-size:13px;line-height:16px;font-weight:400;color:#fff;-webkit-text-stroke:0.30px #fff;transform:scaleX(0.8759);transform-origin:100% 50%">55,3%</span>
<span class="t" style="left:770.73px;top:802.40px;font-size:13px;line-height:16px;font-weight:400;color:#fff;-webkit-text-stroke:0.30px #fff;transform:scaleX(0.8759);transform-origin:100% 50%">12,7%</span>
<span class="t" style="left:300.10px;top:866.00px;font-size:14px;line-height:17px;font-weight:700;color:#fff;transform:scaleX(0.8992);transform-origin:0 50%">Ver mais</span>
<span class="t" style="left:877.50px;top:635.30px;font-size:18px;line-height:22px;font-weight:700;color:#fff;transform:scaleX(0.8781);transform-origin:0 50%">Popular entre diferentes públicos</span>
<span class="t" style="left:877.50px;top:660.60px;font-size:13px;line-height:16px;font-weight:400;color:#aaaaaa;-webkit-text-stroke:0.30px #aaaaaa;transform:scaleX(0.9406);transform-origin:0 50%">Visualizações · Últimos 365 dias</span>
<span class="t" style="left:886.90px;top:705.00px;font-size:14px;line-height:17px;font-weight:700;color:#0f0f0f;transform:scaleX(0.8918);transform-origin:0 50%">Novidade</span>
<span class="t" style="left:977.60px;top:705.00px;font-size:14px;line-height:17px;font-weight:700;color:#fff;transform:scaleX(0.8906);transform-origin:0 50%">Casual</span>
<span class="t" style="left:1053.00px;top:705.00px;font-size:14px;line-height:17px;font-weight:700;color:#fff;transform:scaleX(0.9164);transform-origin:0 50%">Normal</span>
<span class="t" style="left:941.20px;top:760.70px;font-size:13px;line-height:16px;font-weight:400;color:#fff;-webkit-text-stroke:0.30px #fff;transform:scaleX(0.8711);transform-origin:0 50%">Por Que o PSG REMOVEU a ESTRELA da ...</span>
<span class="t" style="left:1359.30px;top:760.70px;font-size:13px;line-height:16px;font-weight:400;color:#fff;-webkit-text-stroke:0.30px #fff;transform:scaleX(0.9320);transform-origin:0 50%">3,3 mi</span>
<span class="t" style="left:941.20px;top:798.50px;font-size:13px;line-height:16px;font-weight:400;color:#fff;-webkit-text-stroke:0.30px #fff;transform:scaleX(0.8703);transform-origin:0 50%">TRÊS ACESSÓRIOS que foram PROIBIDO...</span>
<span class="t" style="left:1359.30px;top:798.50px;font-size:13px;line-height:16px;font-weight:400;color:#fff;-webkit-text-stroke:0.30px #fff;transform:scaleX(0.9320);transform-origin:0 50%">3,0 mi</span>
<span class="t" style="left:941.20px;top:836.30px;font-size:13px;line-height:16px;font-weight:400;color:#fff;-webkit-text-stroke:0.30px #fff;transform:scaleX(0.8807);transform-origin:0 50%">Esses CLUBES tiveram o LOGO BANIDO ...</span>
<span class="t" style="left:1359.30px;top:836.30px;font-size:13px;line-height:16px;font-weight:400;color:#fff;-webkit-text-stroke:0.30px #fff;transform:scaleX(0.9320);transform-origin:0 50%">2,2 mi</span>
<span class="t" style="left:941.20px;top:874.10px;font-size:13px;line-height:16px;font-weight:400;color:#fff;-webkit-text-stroke:0.30px #fff;transform:scaleX(0.8709);transform-origin:0 50%">Como os JOGADORES CEGOS COBRAM ...</span>
<span class="t" style="left:1359.30px;top:874.10px;font-size:13px;line-height:16px;font-weight:400;color:#fff;-webkit-text-stroke:0.30px #fff;transform:scaleX(0.9320);transform-origin:0 50%">2,0 mi</span>
<span class="t" style="left:941.20px;top:911.90px;font-size:13px;line-height:16px;font-weight:400;color:#fff;-webkit-text-stroke:0.30px #fff;transform:scaleX(0.8954);transform-origin:0 50%">O FUTEBOL na Coreia do Norte é TOTAL...</span>
<span class="t" style="left:1359.30px;top:911.90px;font-size:13px;line-height:16px;font-weight:400;color:#fff;-webkit-text-stroke:0.30px #fff;transform:scaleX(0.9320);transform-origin:0 50%">2,0 mi</span>
<span class="t" style="left:1233.38px;top:458.10px;font-size:10.5px;line-height:13px;font-weight:700;color:#fff;transform:scaleX(0.9583);transform-origin:50% 50%">9</span>
<span class="t" style="left:1250.36px;top:458.10px;font-size:10.5px;line-height:13px;font-weight:700;color:#fff;transform:scaleX(0.9512);transform-origin:50% 50%">9+</span>
<span class="t" style="left:1270.41px;top:458.10px;font-size:10.5px;line-height:13px;font-weight:700;color:#fff;transform:scaleX(0.9512);transform-origin:50% 50%">9+</span>
<span class="t" style="left:1290.46px;top:458.10px;font-size:10.5px;line-height:13px;font-weight:700;color:#fff;transform:scaleX(0.9512);transform-origin:50% 50%">9+</span>
<span class="t" style="left:1310.51px;top:458.10px;font-size:10.5px;line-height:13px;font-weight:700;color:#fff;transform:scaleX(0.9512);transform-origin:50% 50%">9+</span>
</div>
</body>
</html>
